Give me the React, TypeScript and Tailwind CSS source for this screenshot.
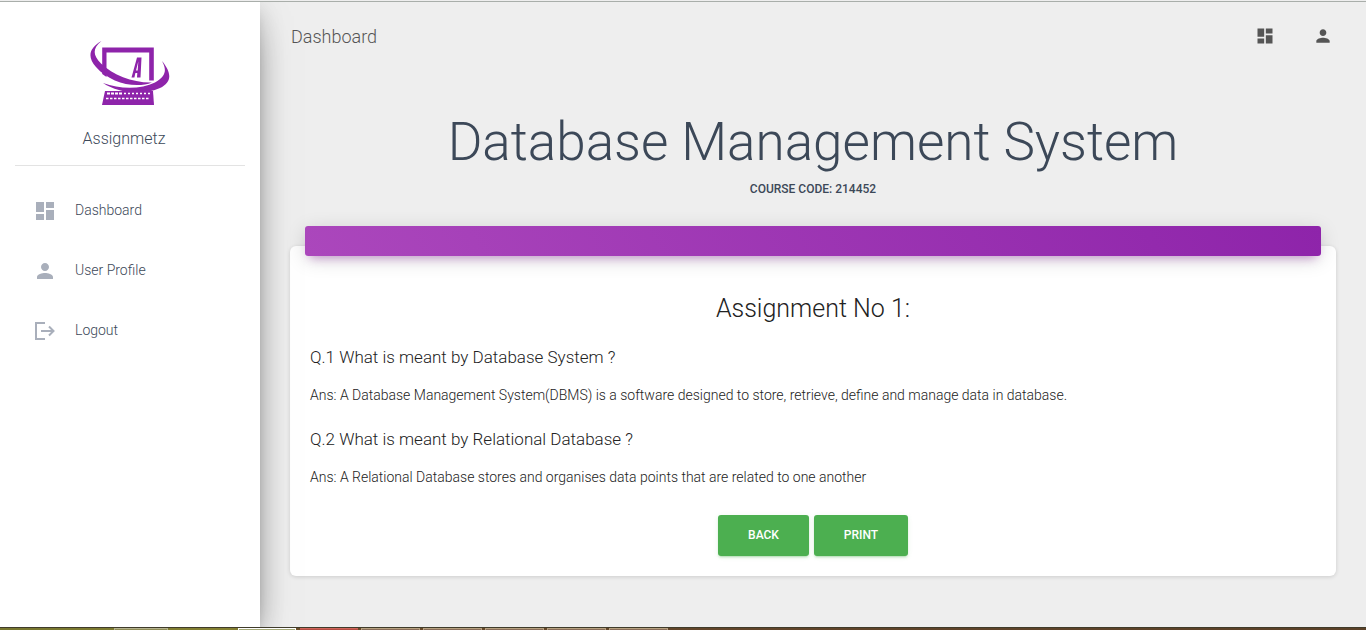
import React from 'react';

type IconProps = { className?: string };

const DashboardIcon = ({ className }: IconProps) => (
  <svg viewBox="0 0 24 24" fill="currentColor" className={className}>
    <path d="M3 13h8V3H3v10zm0 8h8v-6H3v6zm10 0h8V11h-8v10zm0-18v6h8V3h-8z" />
  </svg>
);

const PersonIcon = ({ className }: IconProps) => (
  <svg viewBox="0 0 24 24" fill="currentColor" className={className}>
    <path d="M12 12c2.21 0 4-1.79 4-4s-1.79-4-4-4-4 1.79-4 4 1.79 4 4 4zm0 2c-2.67 0-8 1.34-8 4v2h16v-2c0-2.66-5.33-4-8-4z" />
  </svg>
);

const LogoutIcon = ({ className }: IconProps) => (
  <svg viewBox="0 0 20 20" fill="none" stroke="currentColor" strokeWidth="2" className={className}>
    <path d="M10 2H1V18H10M6 10H18M14 5.5L18.5 10L14 14.5" />
  </svg>
);

const Logo = () => (
  <svg viewBox="0 0 80 66" className="h-[66px] w-20" fill="#8e24aa">
    <path d="M12.2 7.5H63.8V40.5H59.2V12.5H16.5V37L12.2 34Z" />
    <path d="M11.5 1C-1 8-3 17 6 27C20 43 45 49 62 42.5C43 43 23 35 11 23.500C3 15 2 9 11.500 1Z" />
    <path d="M72 21C82 33 82 42 70 48C53 56 28 53 13 43C30 49.500 51 49.500 65 42.500C76 36 77 30 72 21Z" />
    <path d="M15 51L63 51L64 65H12Z" />
    <path
      d="M47 17.500H51.500L50.500 37.500H47L47.300 33H45.400L44.400 37.500H41.500ZM48.300 21.500L46 30.500H47.700Z"
      fillRule="evenodd"
    />
    <path d="M17 53.500H32" stroke="white" strokeWidth="2" strokeDasharray="3 1" />
    <path d="M34 53.500H60" stroke="white" strokeWidth="1.300" strokeDasharray="2 2" />
    <path d="M16 58.500H60" stroke="white" strokeWidth="1.500" strokeDasharray="2.500 1.500" />
  </svg>
);

const navItems = [
  { label: 'Dashboard', icon: <DashboardIcon className="size-6" /> },
  { label: 'User Profile', icon: <PersonIcon className="size-6" /> },
  { label: 'Logout', icon: <LogoutIcon className="ml-0.5 size-5" /> },
];

const answers = [
  {
    question: 'Q.1 What is meant by Database System ?',
    answer:
      'Ans: A Database Management System(DBMS) is a software designed to store, retrieve, define and manage data in database.',
  },
  {
    question: 'Q.2 What is meant by Relational Database ?',
    answer: 'Ans: A Relational Database stores and organises data points that are related to one another',
  },
];

const Sidebar = () => (
  <aside className="z-10 flex w-[260px] shrink-0 flex-col bg-white px-[15px] shadow-[0_16px_38px_-12px_rgba(0,0,0,0.56),0_4px_25px_0_rgba(0,0,0,0.12),0_8px_10px_-5px_rgba(0,0,0,0.2)]">
    <div className="flex h-[164px] flex-col items-center border-b border-[#e3e3e3] pt-[38px]">
      <Logo />
      <span className="mt-[18px] pr-[12px] text-base leading-[30px] text-[#3c4858]">Assignmetz</span>
    </div>
    <nav className="mt-[20px] flex flex-col gap-[10px]">
      {navItems.map((item) => (
        <a key={item.label} className="flex h-[50px] items-center pl-[18px] text-sm text-[#3c4858]">
          <span className="mr-[18px] flex w-6 text-[#a9afbb]">{item.icon}</span>
          <span className="pb-[2px]">{item.label}</span>
        </a>
      ))}
    </nav>
  </aside>
);

const Taskbar = () => (
  <footer className="z-20 flex h-[3px] shrink-0 border-t border-[#3f3b2b] bg-[linear-gradient(90deg,#77762f_0,#858132_230px,#6a4b28_300px,#62452a_700px,#5b4128_100%)]">
    <div className="ml-[114px] h-[2px] w-[54px] border-x border-t border-[#b5b390] bg-[#918e57]" />
    <div className="ml-[70px] h-[2px] w-[58px] border-x border-t border-white bg-[#a6aa78]" />
    <div className="ml-[4px] h-[2px] w-[58px] border-t border-[#cf665b] bg-[#b64c42]" />
    <div className="ml-[3px] flex gap-[3px]">
      {[0, 1, 2, 3, 4].map((tab) => (
        <div key={tab} className="h-[2px] w-[59px] border-x border-t border-[#b6a180] bg-[#8b6e59]" />
      ))}
    </div>
  </footer>
);

export default function App() {
  return (
    <div className="flex h-[630px] w-[1366px] flex-col overflow-hidden bg-[#eeeeee] font-['Roboto',sans-serif] font-light">
      <div className="z-20 h-[2px] shrink-0 border-b border-[#a9aeaa] bg-[#eeeeee]" />
      <div className="flex min-h-0 flex-1">
        <Sidebar />
        <main className="flex min-w-0 flex-1 flex-col px-[30px]">
          <header className="flex h-[70px] items-center justify-between text-[#555555]">
            <h2 className="pl-px text-lg">Dashboard</h2>
            <div className="flex items-center gap-[38px] pr-[3px] pb-[2px]">
              <DashboardIcon className="size-5" />
              <PersonIcon className="size-5" />
            </div>
          </header>
          <div className="mt-[40px] text-center text-[#3c4858]">
            <h1 className="text-[53px] leading-[61px]">Database Management System</h1>
            <p className="mt-[7px] text-xs leading-[18px] font-medium uppercase">Course code: 214452</p>
          </div>
          <section className="mt-[48px] flex h-[330px] flex-col rounded-md bg-white px-[15px] shadow-[0_1px_4px_0_rgba(0,0,0,0.14)]">
            <div className="-mt-5 h-[30px] shrink-0 rounded-[3px] bg-[linear-gradient(60deg,#ab47bc,#8e24aa)] shadow-[0_4px_20px_0_rgba(0,0,0,0.14),0_7px_10px_-5px_rgba(156,39,176,0.4)]" />
            <div className="flex flex-col px-[5px] pt-[36px]">
              <h3 className="text-center text-[25px] leading-[33px] text-[#222222]">Assignment No 1:</h3>
              {answers.map((item) => (
                <article key={item.question} className="mt-[20px] text-[#222222]">
                  <h4 className="text-[17px] leading-6">{item.question}</h4>
                  <p className="mt-[14px] text-sm leading-6">{item.answer}</p>
                </article>
              ))}
              <div className="mt-[26px] flex justify-center gap-[5px]">
                <button className="h-[41px] w-[91px] rounded-[3px] bg-[#4caf50] pb-[2px] text-xs font-medium text-white shadow-[0_2px_2px_0_rgba(76,175,80,0.14),0_3px_1px_-2px_rgba(76,175,80,0.2),0_1px_5px_0_rgba(76,175,80,0.12)]">BACK</button>
                <button className="h-[41px] w-[94px] rounded-[3px] bg-[#4caf50] pb-[2px] text-xs font-medium text-white shadow-[0_2px_2px_0_rgba(76,175,80,0.14),0_3px_1px_-2px_rgba(76,175,80,0.2),0_1px_5px_0_rgba(76,175,80,0.12)]">PRINT</button>
              </div>
            </div>
          </section>
        </main>
      </div>
      <Taskbar />
    </div>
  );
}
